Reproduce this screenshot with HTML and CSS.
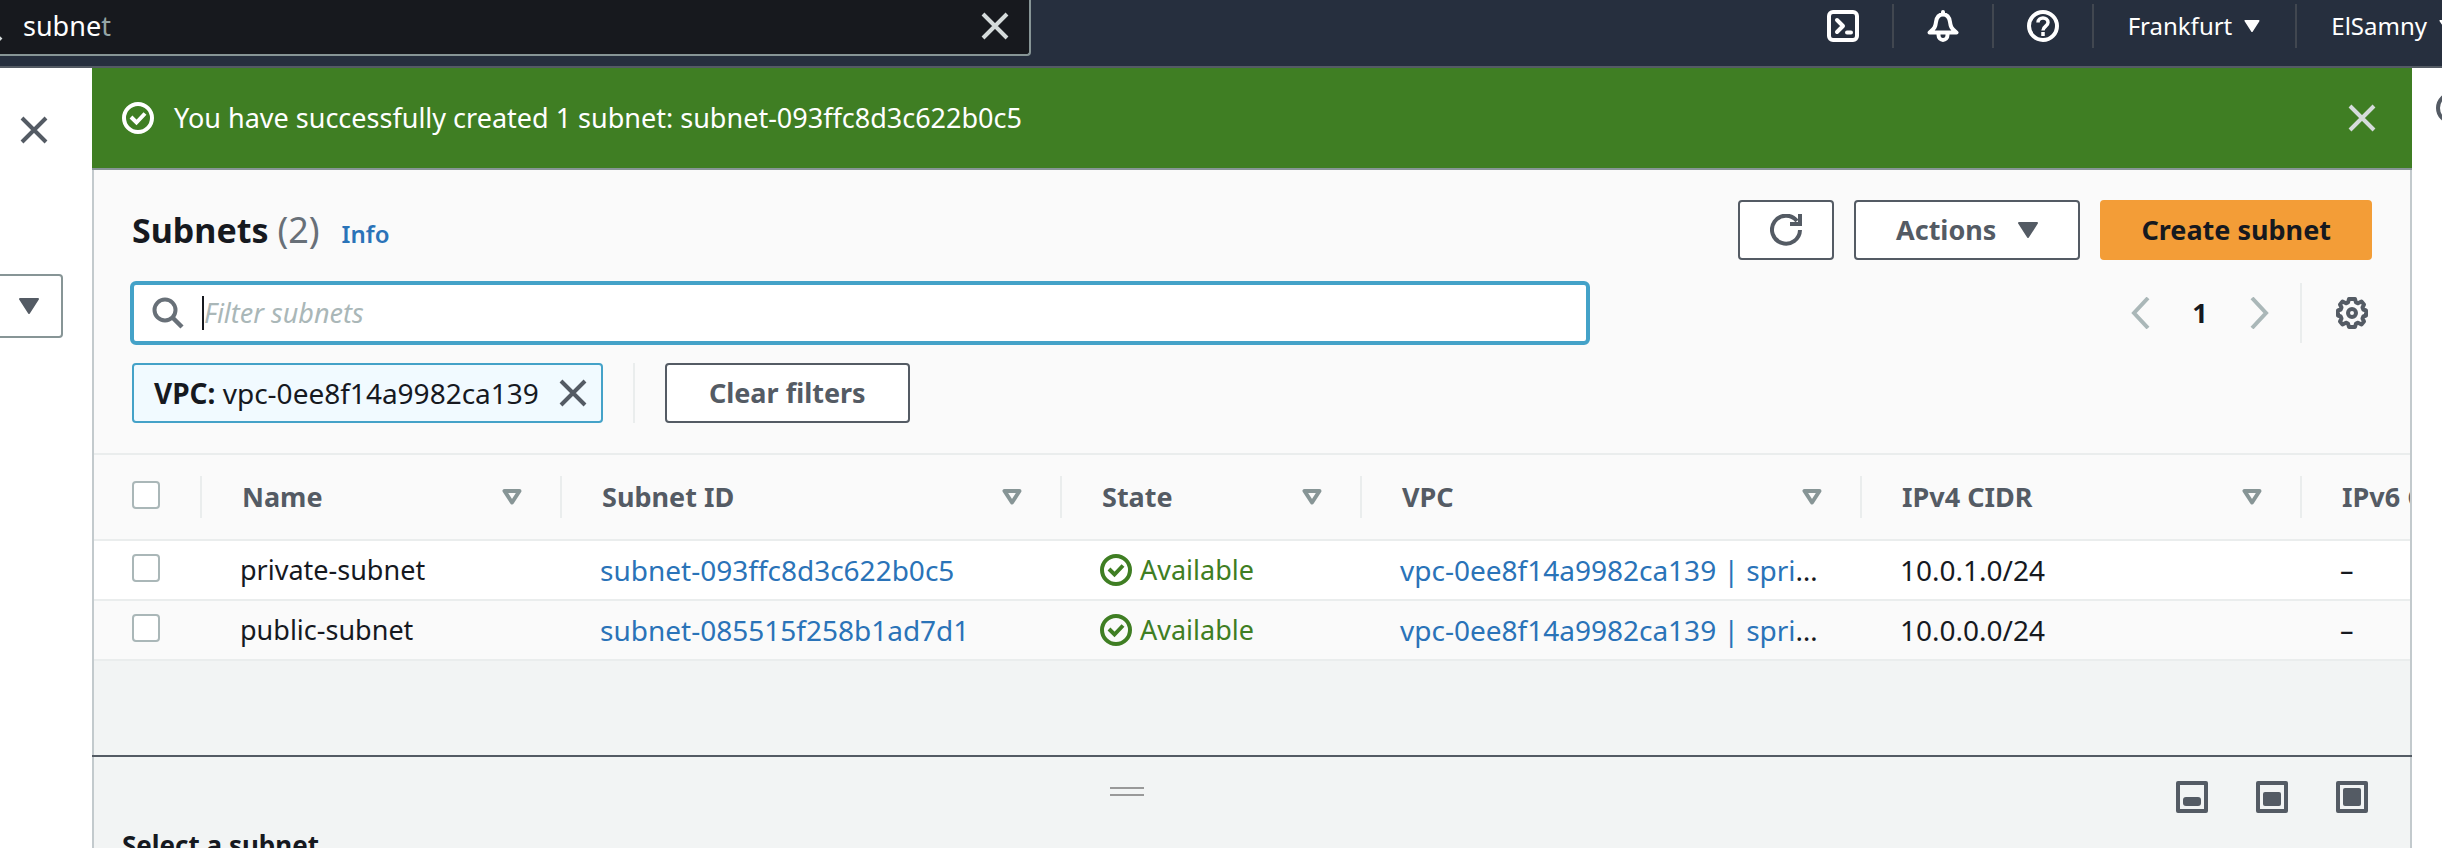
FILE: index.html
```html
<!DOCTYPE html>
<html lang="en">
<head>
<meta charset="utf-8">
<title>Subnets | VPC Management Console</title>
<link rel="stylesheet" href="styles.css">
</head>
<body>
<svg class="sprite" aria-hidden="true">
  <symbol id="close" viewBox="0 0 32 32"><path d="M4 4l24 24M28 4L4 28" fill="none" stroke="currentColor" stroke-width="4"/></symbol>
  <symbol id="check" viewBox="0 0 32 32"><circle cx="16" cy="16" r="14" fill="none" stroke="currentColor" stroke-width="4"/><path d="M9 15l5.500 5.500L23 11.500" fill="none" stroke="currentColor" stroke-width="4"/></symbol>
  <symbol id="caret" viewBox="0 0 20 16"><path d="M1 1h18l-9 14z" fill="currentColor" stroke="currentColor" stroke-width="2" stroke-linejoin="round"/></symbol>
  <symbol id="sort" viewBox="0 0 20 16"><path d="M2.500 2h15L10 13.500z" fill="none" stroke="currentColor" stroke-width="4" stroke-linejoin="round"/></symbol>
</svg>
<div class="page">
  <header class="topbar">
    <form class="search">
      <svg class="search-icon" viewBox="0 0 32 32"><circle cx="14" cy="14" r="10" fill="none" stroke="currentColor" stroke-width="4"/><path d="M21 21l9 9" stroke="currentColor" stroke-width="4"/></svg>
      <label class="search-text"><span class="typed">subne</span><span class="hint">t</span><input class="search-input" type="text" aria-label="Search services"></label>
      <button class="icon-btn light" type="button" aria-label="Clear search"><svg class="i32"><use href="#close"/></svg></button>
    </form>
    <nav class="tools">
      <button class="tool" type="button" aria-label="CloudShell"><svg class="i32" viewBox="0 0 32 32" fill="none" stroke="currentColor" stroke-width="4" stroke-linecap="round"><rect x="2" y="2" width="28" height="28" rx="4"/><path d="M10 10l6 6-6 6" stroke-linejoin="round"/><path d="M20 22.500h4"/></svg></button>
      <button class="tool" type="button" aria-label="Notifications"><svg class="i32" viewBox="0 0 32 32" fill="none" stroke="currentColor" stroke-width="4" stroke-linecap="round" stroke-linejoin="round"><path d="M16 2v2M2.500 22.500C8 18.500 8.500 16 9 12c.600-4.500 3-7.500 7-7.500s6.400 3 7 7.500c.500 4 1 6.500 6.500 10.500z"/><path d="M11.500 23v2c0 6.500 9 6.500 9 0v-2"/></svg></button>
      <button class="tool" type="button" aria-label="Help"><svg class="i32" viewBox="0 0 32 32" fill="none" stroke="currentColor" stroke-width="4"><circle cx="16" cy="16" r="14"/><path d="M11 12.500c0-6 10-6 10 0 0 4-5 3.500-5 8M16 22v4" stroke-width="3.500"/></svg></button>
      <button class="tool region" type="button">Frankfurt<svg class="caret-sm"><use href="#caret"/></svg></button>
      <button class="tool account" type="button">ElSamny<svg class="caret-sm"><use href="#caret"/></svg></button>
    </nav>
  </header>
  <div class="body">
    <aside class="side">
      <button class="icon-btn" type="button" aria-label="Close navigation"><svg class="i32"><use href="#close"/></svg></button>
      <button class="side-select" type="button" aria-label="Filter by VPC"><svg class="caret"><use href="#caret"/></svg></button>
    </aside>
    <main class="main">
      <div class="flash" role="status">
        <svg class="i32"><use href="#check"/></svg>
        <span class="flash-text">You have successfully created 1 subnet: subnet-093ffc8d3c622b0c5</span>
        <button class="icon-btn light" type="button" aria-label="Dismiss"><svg class="i32"><use href="#close"/></svg></button>
      </div>
      <section class="panel">
        <div class="title-row">
          <h1 class="title">Subnets <span class="count">(2)</span></h1>
          <a class="info" href="#info">Info</a>
          <div class="actions">
            <button class="btn refresh" type="button" aria-label="Refresh"><svg class="i32" viewBox="0 0 32 32" fill="none" stroke="currentColor" stroke-width="4"><path d="M30 16a14 14 0 1 1-3-9"/><path d="M30 0v10H20" /></svg></button>
            <button class="btn" type="button">Actions<svg class="caret"><use href="#caret"/></svg></button>
            <button class="btn primary" type="button">Create subnet</button>
          </div>
        </div>
        <div class="filter-row">
          <label class="filter">
            <svg class="i32" viewBox="0 0 32 32"><circle cx="13" cy="13" r="10.500" fill="none" stroke="currentColor" stroke-width="4"/><path d="M20.500 20.500l9.500 9.500" stroke="currentColor" stroke-width="4.500"/></svg>
            <span class="cursor"></span>
            <input class="filter-input" type="text" placeholder="Filter subnets" aria-label="Filter subnets">
          </label>
          <div class="pager">
            <button class="page-btn" type="button" aria-label="Previous page"><svg class="chev" viewBox="0 0 20 32"><path d="M17 1L3 16l14 15" fill="none" stroke="currentColor" stroke-width="4"/></svg></button>
            <button class="page-num" type="button">1</button>
            <button class="page-btn" type="button" aria-label="Next page"><svg class="chev" viewBox="0 0 20 32"><path d="M3 1l14 15L3 31" fill="none" stroke="currentColor" stroke-width="4"/></svg></button>
            <span class="rule"></span>
            <button class="icon-btn gear" type="button" aria-label="Preferences"><svg class="i32" viewBox="0 0 32 32" fill="none" stroke="currentColor" stroke-width="4" stroke-linejoin="round"><path d="M13 2h6l1 3.500 2 .800L25.500 4.500 28 7.500l-1.500 3 .800 2L30 13.500v5l-2.700 1-.800 2 1.500 3-2.500 3-3.500-1.800-2 .800-1 3.500h-6l-1-3.500-2-.800-3.500 1.800L4 24.500l1.500-3-.800-2L2 18.500v-5l2.700-1 .800-2L4 7.500l2.500-3L10 6.300l2-.800z"/><circle cx="16" cy="16" r="4"/></svg></button>
          </div>
        </div>
        <div class="token-row">
          <div class="token"><span><b>VPC:</b> vpc-0ee8f14a9982ca139</span><button class="icon-btn" type="button" aria-label="Remove filter"><svg class="i32"><use href="#close"/></svg></button></div>
          <span class="rule"></span>
          <button class="btn clear" type="button">Clear filters</button>
        </div>
      </section>
      <div class="table-wrap">
        <table class="table">
          <colgroup><col class="c-check"><col class="c-name"><col class="c-id"><col class="c-state"><col class="c-vpc"><col class="c-v4"><col class="c-v6"></colgroup>
          <thead>
            <tr>
              <th><input class="box" type="checkbox" aria-label="Select all"></th>
              <th><div class="th">Name<svg class="caret"><use href="#sort"/></svg></div></th>
              <th><div class="th">Subnet ID<svg class="caret"><use href="#sort"/></svg></div></th>
              <th><div class="th">State<svg class="caret"><use href="#sort"/></svg></div></th>
              <th><div class="th">VPC<svg class="caret"><use href="#sort"/></svg></div></th>
              <th><div class="th">IPv4 CIDR<svg class="caret"><use href="#sort"/></svg></div></th>
              <th><div class="th">IPv6 CIDR</div></th>
            </tr>
          </thead>
          <tbody>
            <tr>
              <td><input class="box" type="checkbox" aria-label="Select private-subnet"></td>
              <td>private-subnet</td>
              <td class="code"><a href="#s1">subnet-093ffc8d3c622b0c5</a></td>
              <td><span class="state"><svg class="i32"><use href="#check"/></svg>Available</span></td>
              <td class="code"><a href="#v1">vpc-0ee8f14a9982ca139 | spri</a>…</td>
              <td class="code">10.0.1.0/24</td>
              <td>–</td>
            </tr>
            <tr>
              <td><input class="box" type="checkbox" aria-label="Select public-subnet"></td>
              <td>public-subnet</td>
              <td class="code"><a href="#s2">subnet-085515f258b1ad7d1</a></td>
              <td><span class="state"><svg class="i32"><use href="#check"/></svg>Available</span></td>
              <td class="code"><a href="#v2">vpc-0ee8f14a9982ca139 | spri</a>…</td>
              <td class="code">10.0.0.0/24</td>
              <td>–</td>
            </tr>
          </tbody>
        </table>
      </div>
      <section class="split">
        <div class="split-bar">
          <span class="handle"></span>
          <div class="split-tools">
            <button class="icon-btn" type="button" aria-label="Small panel"><svg class="i32" viewBox="0 0 32 32"><rect x="2" y="2" width="28" height="28" fill="none" stroke="currentColor" stroke-width="4" stroke-linejoin="round"/><rect x="7" y="16" width="18" height="9" rx="3" fill="currentColor"/></svg></button>
            <button class="icon-btn" type="button" aria-label="Medium panel"><svg class="i32" viewBox="0 0 32 32"><rect x="2" y="2" width="28" height="28" fill="none" stroke="currentColor" stroke-width="4" stroke-linejoin="round"/><rect x="7" y="11" width="18" height="14" rx="2" fill="currentColor"/></svg></button>
            <button class="icon-btn" type="button" aria-label="Full panel"><svg class="i32" viewBox="0 0 32 32"><rect x="2" y="2" width="28" height="28" fill="none" stroke="currentColor" stroke-width="4" stroke-linejoin="round"/><rect x="7" y="7" width="18" height="18" rx="2" fill="currentColor"/></svg></button>
          </div>
        </div>
        <h2 class="split-title">Select a subnet</h2>
      </section>
    </main>
    <aside class="help">
      <button class="icon-btn" type="button" aria-label="Open help panel"><svg class="i32" viewBox="0 0 32 32" fill="none" stroke="currentColor" stroke-width="4"><circle cx="16" cy="16" r="14"/><path d="M16 14v9M16 8v4"/></svg></button>
    </aside>
  </div>
</div>
</body>
</html>
```
FILE: styles.css
```css
* { box-sizing: border-box; }
body {
  margin: 0;
  overflow: hidden;
  background: #fff;
  color: #16191f;
  font-family: "Noto Sans", "Open Sans", sans-serif;
  font-size: 27px;
  line-height: 36px;
}
button, input { font: inherit; color: inherit; }
button { margin: 0; padding: 0; border: 0; background: none; }
svg { display: block; flex: none; }
a { color: #2a73b8; text-decoration: none; }
.sprite { position: absolute; width: 0; height: 0; }
.page { display: flex; flex-direction: column; height: 100vh; overflow: hidden; }
.i32 { width: 32px; height: 32px; }
.caret { width: 20px; height: 16px; }
.caret-sm { width: 16px; height: 12px; }
.icon-btn { display: flex; color: #545b64; }
.icon-btn.light { color: #d5dbdb; }

.topbar {
  display: flex;
  justify-content: space-between;
  flex: none;
  height: 68px;
  border-bottom: 2px solid #545b64;
  background: #262f3e;
  color: #fff;
}
.search {
  display: flex;
  align-items: center;
  width: 1031px;
  height: 56px;
  padding: 0 18px 2px 0;
  border: 2px solid #879596;
  border-width: 0 2px 2px 0;
  border-radius: 0 0 4px 0;
  background: #17191e;
}
.search-icon { width: 32px; height: 32px; margin: 0 20px 0 -29px; color: #d5dbdb; }
.search-text { display: flex; flex: 1; padding-top: 2px; }
.hint { color: #95a5a6; }
.search-input { flex: 1; min-width: 0; border: 0; background: none; outline: 0; }
.tools { display: flex; align-items: flex-start; padding-top: 4px; font-size: 24px; flex: none; margin-right: -48px; }
.tool {
  display: flex;
  align-items: center;
  gap: 12px;
  height: 44px;
  padding: 0 33px;
  border-left: 2px solid #414750;
}
.tool:first-child { border-left: 0; }
.region, .account { padding: 0 35px 0 34px; }

.body { display: flex; flex: 1; min-height: 0; }
.side { width: 92px; flex: none; padding-top: 46px; }
.side .icon-btn { margin-left: 18px; }
.side-select {
  display: flex;
  align-items: center;
  justify-content: flex-end;
  width: 63px;
  height: 64px;
  margin-top: 128px;
  padding-right: 22px;
  border: 2px solid #879596;
  border-left: 0;
  border-radius: 0 4px 4px 0;
  color: #545b64;
}
.help { width: 30px; flex: none; padding: 24px 0 0 24px; overflow: hidden; }
.main {
  display: flex;
  flex-direction: column;
  flex: 1;
  min-width: 0;
  border: 2px solid #c3cacd;
  border-width: 0 2px;
  background: #f2f4f4;
}
.flash {
  display: flex;
  align-items: center;
  flex: none;
  gap: 20px;
  height: 102px;
  margin: 0 -2px;
  padding: 0 34px 0 30px;
  border-bottom: 2px solid #879596;
  background: #3f7e23;
  color: #fff;
}
.flash-text { flex: 1; }

.panel { flex: none; padding: 30px 38px 30px; background: #fafafa; }
.title-row { display: flex; align-items: center; height: 60px; }
.title { margin: 0; font-size: 34px; line-height: 44px; font-weight: 700; }
.count { font-size: 36px; font-weight: 400; color: #687078; }
.info { margin: 8px 0 0 22px; font-size: 24px; line-height: 32px; font-weight: 600; }
.actions { display: flex; gap: 20px; margin-left: auto; }
.btn {
  display: flex;
  align-items: center;
  justify-content: center;
  gap: 22px;
  height: 60px;
  padding: 0 40px;
  border: 2px solid #545b64;
  border-radius: 4px;
  background: #fff;
  color: #545b64;
  font-weight: 700;
}
.refresh { width: 96px; padding: 0; }
.primary { padding: 0 39px; border-color: #f39d37; background: #f39d37; color: #16191f; }
.clear { padding: 0 42px; }
.filter-row { display: flex; justify-content: space-between; align-items: center; margin-top: 21px; }
.filter {
  display: flex;
  align-items: center;
  flex: 0 1 1460px;
  height: 64px;
  margin-left: -2px;
  padding: 0 18px;
  border: 4px solid #44a2c8;
  border-radius: 6px;
  background: #fff;
  color: #687078;
}
.cursor { width: 2px; height: 34px; margin-left: 18px; background: #16191f; }
.filter-input { flex: 1; min-width: 0; padding: 0; border: 0; outline: 0; background: none; }
.filter-input::placeholder { color: #aab7b8; font-style: italic; opacity: 1; }
.pager { display: flex; align-items: center; height: 60px; }
.page-btn { color: #aab7b8; }
.chev { width: 20px; height: 32px; }
.page-num { width: 98px; font-weight: 700; }
.rule { width: 2px; height: 60px; background: #eaeded; }
.pager .rule { margin: 0 34px 0 31px; }
.gear { margin-right: 4px; }
.token-row { display: flex; align-items: center; gap: 30px; margin-top: 18px; }
.token {
  display: flex;
  align-items: center;
  gap: 18px;
  height: 60px;
  padding: 0 12px 0 20px;
  border: 2px solid #44a2c8;
  border-radius: 4px;
  background: #f1faff;
  font-size: 28px;
}

.table-wrap { flex: none; overflow: hidden; }
.table { width: 2500px; table-layout: fixed; border-collapse: separate; border-spacing: 0; }
.c-check { width: 106px; }
.c-name { width: 360px; }
.c-id, .c-vpc { width: 500px; }
.c-state { width: 300px; }
.c-v4 { width: 440px; }
.table th { height: 88px; padding: 0; border: 2px solid #eaeded; border-width: 2px 0; background: #fafafa; color: #545b64; font-weight: 700; text-align: left; }
.th { display: flex; align-items: center; justify-content: space-between; height: 42px; padding: 0 38px 0 40px; border-left: 2px solid #eaeded; }
.th .caret { color: #879596; }
.table td { height: 60px; padding: 0 0 0 40px; border-bottom: 2px solid #eaeded; background: #fff; white-space: nowrap; }
.table td:first-child { padding-left: 38px; }
.table .code { font-size: 28px; }
.table tbody tr:nth-child(2) td { background: #fafafa; }
.box {
  display: block;
  appearance: none;
  width: 28px;
  height: 28px;
  margin: 0 0 4px;
  border: 2px solid #aab7b8;
  border-radius: 4px;
  background: #fff;
}
.table th .box { margin-left: 38px; }
.state { display: flex; align-items: center; gap: 8px; color: #3f7e23; }

.split { margin: auto -2px 0; height: 93px; flex: none; border-top: 2px solid #545b64; overflow: hidden; }
.split-bar { display: grid; grid-template-columns: 1fr auto; align-items: center; height: 72px; padding-right: 44px; }
.handle { justify-self: center; width: 34px; height: 9px; margin-top: -4px; border: 2px solid #999; border-width: 2px 0; }
.split-tools { display: flex; gap: 48px; padding: 8px 0 0 14px; }
.split-title { margin: 0; padding: 0 30px; font-size: 26px; line-height: 32px; }
```
